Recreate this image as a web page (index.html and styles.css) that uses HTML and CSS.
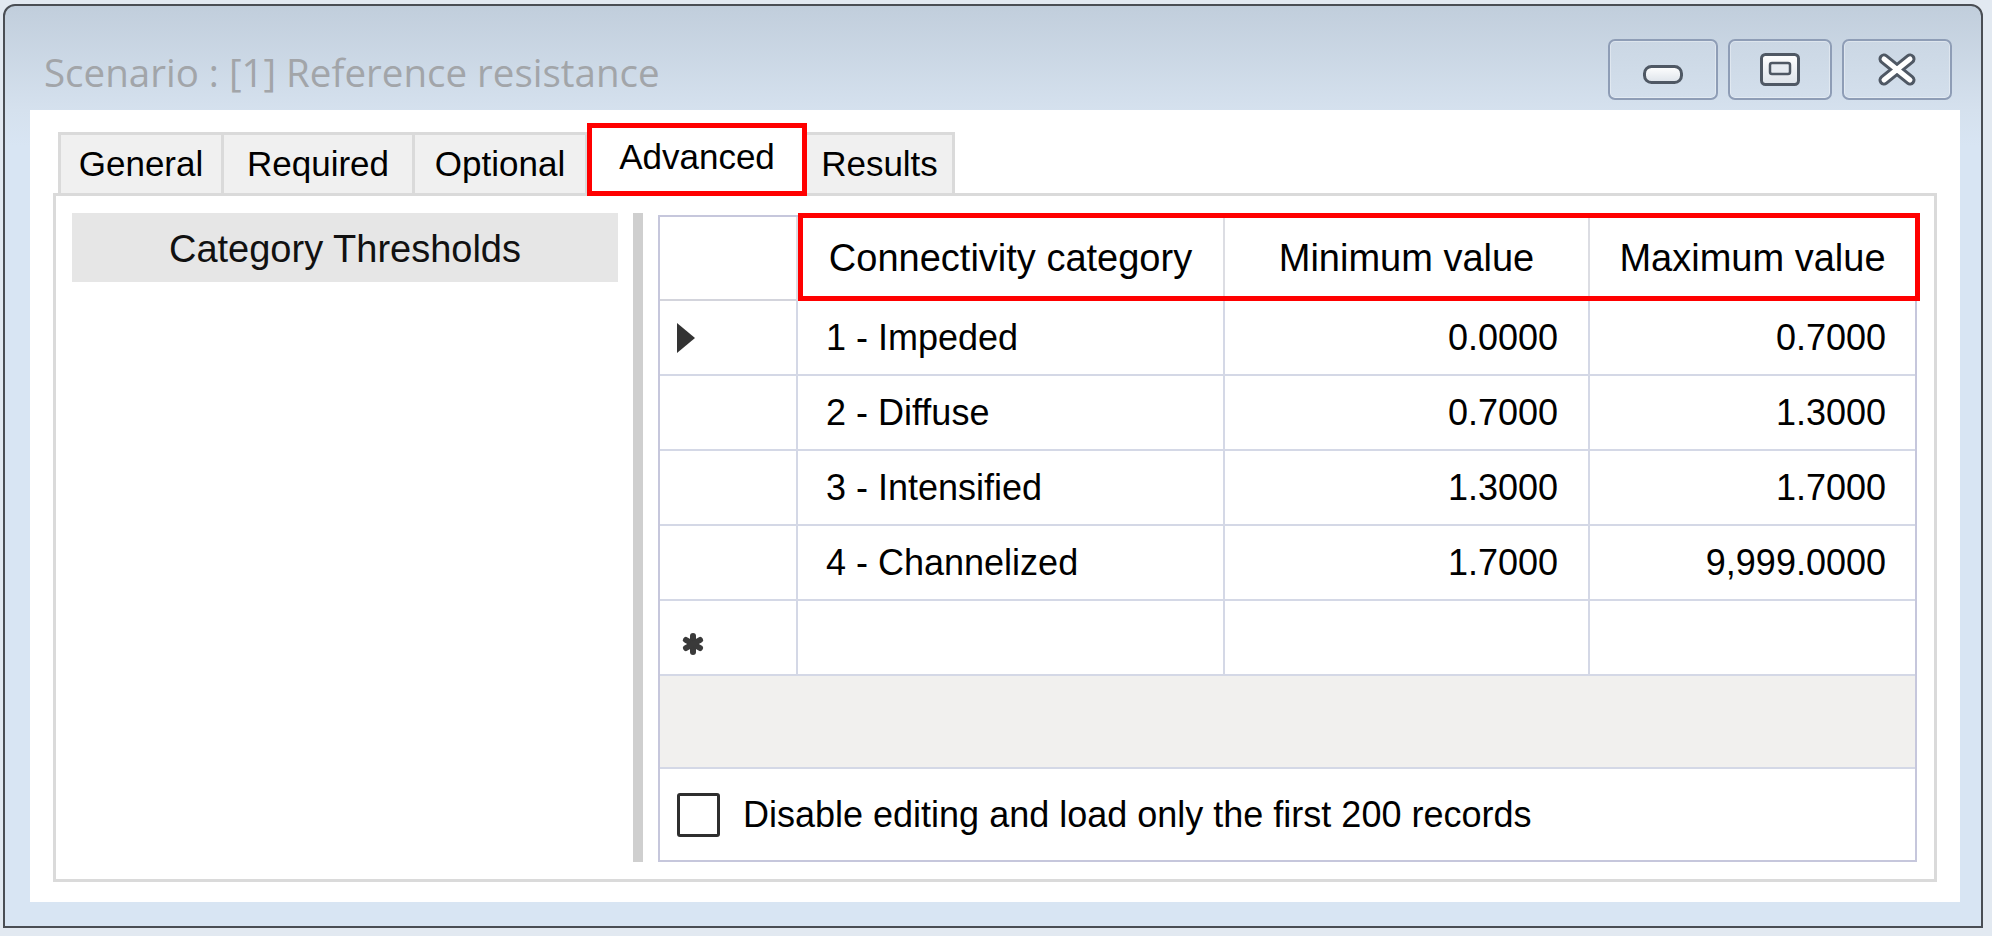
FILE: index.html
```html
<!DOCTYPE html>
<html lang="en">
<head>
<meta charset="utf-8">
<title>Scenario : [1] Reference resistance</title>
<link rel="stylesheet" href="styles.css">
</head>
<body>
<div class="window">
  <div class="titlebar">
    <span class="title">Scenario : [1] Reference resistance</span>
    <div class="caption-buttons">
      <div class="cbtn cbtn-wide cbtn-min">
        <svg width="40" height="19" viewBox="0 0 40 19"><defs><linearGradient id="gw" x1="0" y1="0" x2="0" y2="1"><stop offset="0" stop-color="#ffffff"/><stop offset="1" stop-color="#dde3ea"/></linearGradient></defs><rect x="1.5" y="1.5" width="37" height="16" rx="7" fill="url(#gw)" stroke="#4f5864" stroke-width="3"/></svg>
      </div>
      <div class="cbtn cbtn-max">
        <svg width="40" height="33" viewBox="0 0 40 33"><rect x="1.5" y="1.5" width="37" height="30" rx="4" fill="url(#gw)" stroke="#4f5864" stroke-width="3"/><rect x="10" y="10" width="20" height="11" rx="2" fill="#e6ebf1" stroke="#4f5864" stroke-width="2.5"/></svg>
      </div>
      <div class="cbtn cbtn-wide">
        <svg width="40" height="33" viewBox="0 0 40 33"><path d="M7 6 L33 27 M33 6 L7 27" stroke="#4f5864" stroke-width="11" stroke-linecap="round"/><path d="M7 6 L33 27 M33 6 L7 27" stroke="#ffffff" stroke-width="5" stroke-linecap="round"/></svg>
      </div>
    </div>
  </div>
  <div class="client">
    <div class="tabs">
      <div class="tab tab-general">General</div>
      <div class="tab tab-required">Required</div>
      <div class="tab tab-optional">Optional</div>
      <div class="tab tab-selected">Advanced</div>
      <div class="tab tab-results">Results</div>
    </div>
    <div class="tabpage">
      <div class="leftpane">
        <div class="cat-header">Category Thresholds</div>
      </div>
      <div class="splitter"></div>
      <div class="grid">
        <div class="table">
          <div class="cell hdr rowhdr hdr-c1"></div>
          <div class="cell hdr hdr-c2">Connectivity category</div>
          <div class="cell hdr hdr-c3">Minimum value</div>
          <div class="cell hdr hdr-c4 last">Maximum value</div>
          <div class="hdr-highlight"></div>

          <div class="cell rowhdr"><svg width="20" height="32" viewBox="0 0 20 32"><path d="M1 1 L19 16 L1 31 Z" fill="#333"/></svg></div>
          <div class="cell txt">1 - Impeded</div>
          <div class="cell num">0.0000</div>
          <div class="cell num last">0.7000</div>

          <div class="cell rowhdr"></div>
          <div class="cell txt">2 - Diffuse</div>
          <div class="cell num">0.7000</div>
          <div class="cell num last">1.3000</div>

          <div class="cell rowhdr"></div>
          <div class="cell txt">3 - Intensified</div>
          <div class="cell num">1.3000</div>
          <div class="cell num last">1.7000</div>

          <div class="cell rowhdr"></div>
          <div class="cell txt">4 - Channelized</div>
          <div class="cell num">1.7000</div>
          <div class="cell num last">9,999.0000</div>

          <div class="cell rowhdr newrow"><svg width="22" height="22" viewBox="0 0 22 22"><g stroke="#3a3a3a" stroke-width="6" stroke-linecap="round"><path d="M11 3 L11 19"/><path d="M4 7 L18 15"/><path d="M18 7 L4 15"/></g></svg></div>
          <div class="cell"></div>
          <div class="cell"></div>
          <div class="cell last"></div>
        </div>
        <div class="empty"></div>
        <div class="footer">
          <div class="checkbox"></div>
          <span class="footer-label">Disable editing and load only the first 200 records</span>
        </div>
      </div>
    </div>
  </div>
</div>
</body>
</html>
```

FILE: styles.css
```css
html, body {
  margin: 0;
  padding: 0;
}

body {
  background: #e2e9f1;
  font-family: "Liberation Sans", Arial, sans-serif;
  color: #000;
  width: 1992px;
  height: 936px;
  overflow: hidden;
}

.window {
  margin: 4px 0 0 3px;
  width: 1980px;
  height: 924px;
  box-sizing: border-box;
  border: 2px solid #4a4e54;
  border-radius: 12px 12px 0 0;
  background: linear-gradient(to bottom, #c1cedc 0, #d5e1ee 104px, #d8e5f3 140px, #d8e5f3 100%);
  display: flex;
  flex-direction: column;
  padding: 0 21px 24px 25px;
}

.titlebar {
  height: 104px;
  flex: none;
  display: flex;
  justify-content: space-between;
  align-items: flex-start;
  padding: 0 8px 0 14px;
}

.title {
  font-family: "Open Sans", "Noto Sans", sans-serif;
  font-size: 38.5px;
  line-height: 44px;
  margin-top: 44px;
  color: #a2a5a9;
  white-space: nowrap;
}

.caption-buttons {
  display: flex;
  gap: 10px;
  margin-top: 33px;
}

.cbtn {
  width: 104px;
  height: 61px;
  box-sizing: border-box;
  border: 2px solid #8e9db6;
  border-radius: 7px;
  background: linear-gradient(to bottom, #cbd7e4, #d3dfec);
  box-shadow: inset 0 0 0 1px rgba(255, 255, 255, 0.35);
  display: flex;
  align-items: center;
  justify-content: center;
}

.cbtn-wide {
  width: 110px;
}

.cbtn-min svg {
  margin-top: 10px;
}

.client {
  flex: 1;
  background: #fff;
  display: flex;
  flex-direction: column;
  padding: 0 23px 20px 23px;
}

.tabs {
  height: 83px;
  flex: none;
  display: flex;
  align-items: flex-end;
  padding-left: 5px;
}

.tab {
  height: 61px;
  box-sizing: border-box;
  border: 3px solid #dadada;
  border-bottom: 0;
  background: #f0f0f0;
  font-size: 35px;
  display: flex;
  align-items: center;
  justify-content: center;
  white-space: nowrap;
}

.tab + .tab {
  margin-left: -3px;
}

.tab-general { width: 166px; }
.tab-required { width: 194px; }
.tab-optional { width: 176px; }
.tab-results { width: 151px; }

.tab.tab-selected {
  position: relative;
  z-index: 2;
  width: 220px;
  height: 73px;
  margin-left: -1px;
  margin-bottom: -3px;
  border: 5px solid #ff0000;
  background: #fff;
  padding-bottom: 6px;
}

.tabpage {
  flex: 1;
  border: 3px solid #dadada;
  display: flex;
  padding: 17px 17px 17px 16px;
}

.leftpane {
  width: 546px;
  flex: none;
}

.cat-header {
  height: 69px;
  background: #e6e6e6;
  font-size: 38px;
  display: flex;
  align-items: center;
  justify-content: center;
  padding-top: 3px;
  box-sizing: border-box;
  color: #111;
}

.splitter {
  width: 10px;
  flex: none;
  margin: 0 15px;
  background: #cfcfcf;
}

.grid {
  flex: 1;
  margin-top: 2px;
  border: 2px solid #c6c7dc;
  display: flex;
  flex-direction: column;
}

.table {
  display: grid;
  grid-template-columns: 138px 427px 365px 1fr;
  grid-template-rows: 84px repeat(5, 75px);
}

.cell {
  box-sizing: border-box;
  border-right: 2px solid #d4d8e6;
  border-bottom: 2px solid #d4d8e6;
  display: flex;
  align-items: center;
  font-size: 36px;
  white-space: nowrap;
}

.cell.last {
  border-right: 0;
}

.hdr {
  justify-content: center;
  font-size: 38px;
  border-right-color: #dcdde3;
  border-bottom-color: #d3d4dc;
}

.hdr-c1 { grid-row: 1; grid-column: 1; }
.hdr-c2 { grid-row: 1; grid-column: 2; }
.hdr-c3 { grid-row: 1; grid-column: 3; }
.hdr-c4 { grid-row: 1; grid-column: 4; }

.hdr-highlight {
  grid-column: 2 / -1;
  grid-row: 1;
  margin: -4px -5px 0 0;
  border: 5px solid #ff0000;
  z-index: 1;
}

.rowhdr {
  padding-left: 16px;
}

.newrow {
  padding-left: 22px;
  padding-top: 12px;
}

.txt {
  padding-left: 28px;
}

.num {
  justify-content: flex-end;
  padding-right: 30px;
}

.num.last {
  padding-right: 29px;
}

.empty {
  flex: 1;
  background: #f1f0ee;
  border-bottom: 2px solid #d4d8e6;
}

.footer {
  height: 91px;
  flex: none;
  display: flex;
  align-items: center;
  padding-left: 17px;
  gap: 23px;
}

.checkbox {
  width: 43px;
  height: 44px;
  box-sizing: border-box;
  border: 3px solid #2e2e2e;
  border-radius: 3px;
  background: #fff;
}

.footer-label {
  font-size: 36px;
  white-space: nowrap;
}
```
